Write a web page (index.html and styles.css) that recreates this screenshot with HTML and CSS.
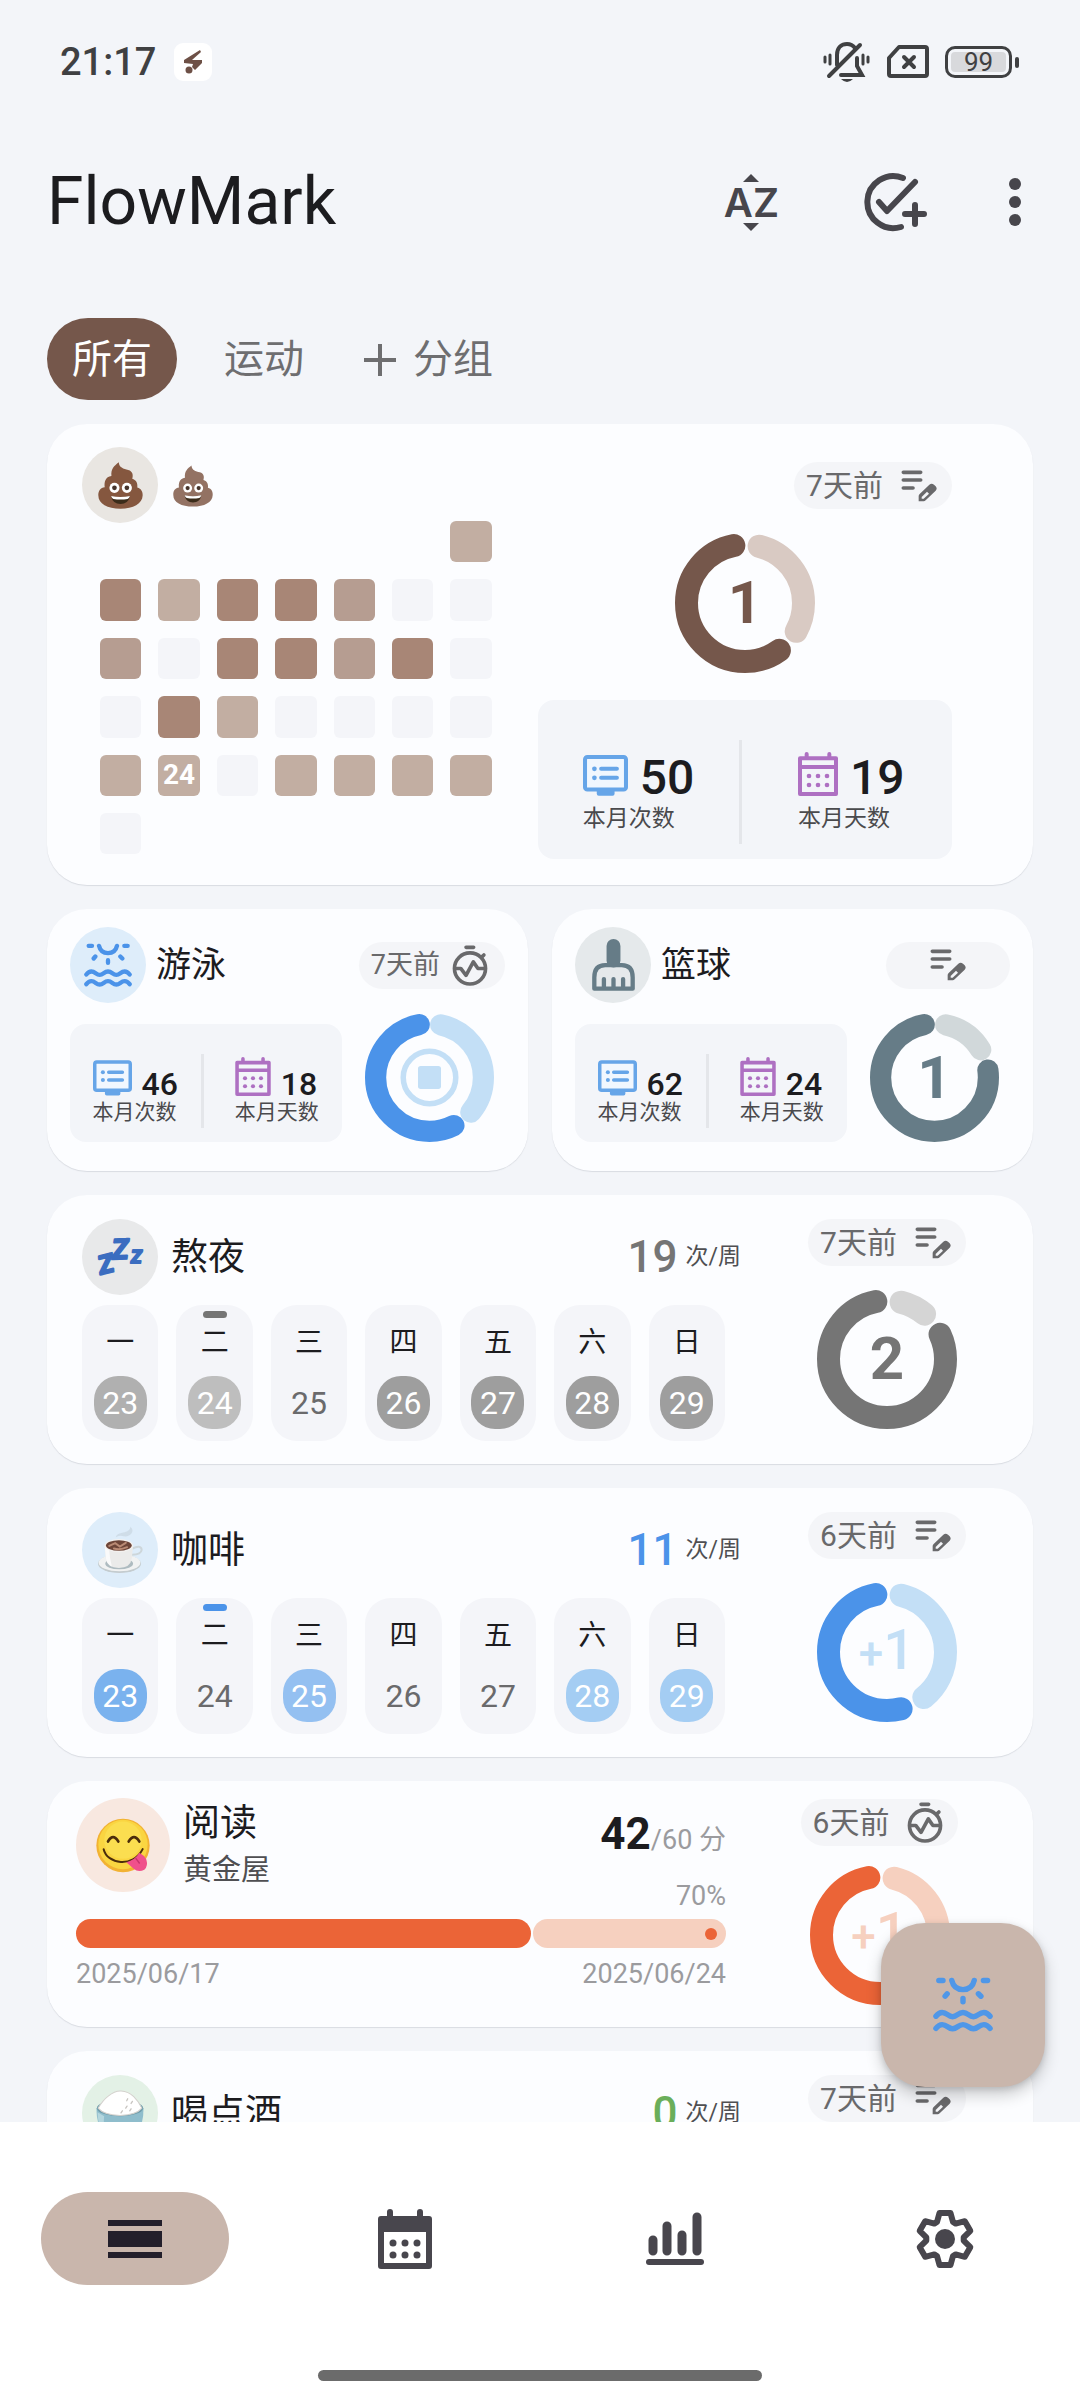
FILE: index.html
```html
<!DOCTYPE html>
<html lang="zh-CN">
<head>
<meta charset="utf-8">
<meta name="viewport" content="width=device-width, initial-scale=1">
<title>FlowMark</title>
<link rel="stylesheet" href="styles.css">
</head>
<body>
<svg class="sprite" aria-hidden="true">
  <symbol id="i-poop" viewBox="0 0 134 140">
    <path fill="currentColor" d="M62 1C62 16 76 21 90 24C104 28 105 40 102 50C113 53 119 63 117 76C129 79 134 90 133 100C132 125 105 139 67 139C28 139 1 125 1 100C0 86 8 76 20 75C18 60 22 44 40 42C38 20 48 12 62 1Z"/>
    <circle cx="49" cy="77" r="15" fill="#fff"/><circle cx="86" cy="77" r="15" fill="#fff"/>
    <circle cx="49" cy="77" r="7" fill="#46342b"/><circle cx="86" cy="77" r="7" fill="#46342b"/>
    <path fill="#3b2c1a" d="M39 102Q67 108 95 102Q90 125 67 125Q44 125 39 102Z"/>
    <path fill="#fff" d="M39 101Q67 107 95 101Q93 108 88 110Q67 114 46 110Q41 108 39 101Z"/>
  </symbol>
  <symbol id="i-coffee" viewBox="0 0 136 145">
    <path fill="#cbd8e3" opacity=".8" d="M54 34C58 14 96 26 98 2C114 16 96 34 78 31Q66 27 54 34Z"/>
    <ellipse cx="65" cy="114" rx="65" ry="28" fill="#c4cccf"/><ellipse cx="65" cy="111" rx="63" ry="26" fill="#f1f2f2"/>
    <ellipse cx="64" cy="114" rx="42" ry="17" fill="#aebbc0"/>
    <path fill="none" stroke="#cdd6da" stroke-width="6" d="M104 68Q130 56 132 72Q130 86 103 87"/>
    <path fill="#ebebea" d="M20 60L24 98Q28 126 63 127Q98 126 102 98L106 60Z"/>
    <path fill="#fafafa" d="M20 60L24 98Q27 116 42 122Q34 90 34 68Z"/>
    <ellipse cx="63" cy="59" rx="43" ry="20" fill="#f3f1ef"/><ellipse cx="63" cy="59" rx="39" ry="16" fill="#6d4538"/>
    <path fill="none" stroke="#b98a74" stroke-width="6" stroke-linecap="round" d="M34 60L52 52L66 62L84 51M48 68Q66 74 88 64"/>
  </symbol>
  <symbol id="i-yum" viewBox="0 0 168 164">
    <circle cx="84" cy="82" r="80" fill="#f2b233"/><circle cx="84" cy="79" r="74" fill="#fad541"/><circle cx="84" cy="66" r="56" fill="#fbde50"/>
    <g fill="none" stroke="#4b2d0b" stroke-linecap="round"><path stroke-width="8" d="M39 70Q54 44 70 70M101 70Q117 44 133 70"/><path stroke-width="6" d="M26 93C36 138 114 150 143 93"/></g>
    <path fill="#f0508b" d="M94 132Q120 126 133 104Q148 112 154 124Q160 144 148 155Q130 164 116 152Z"/><path fill="none" stroke="#c8336c" stroke-width="4" d="M122 120L134 136"/>
  </symbol>
  <symbol id="i-rice" viewBox="0 0 142 140">
    <path fill="#8fbdcc" d="M1 54Q0 130 50 138H92Q142 130 141 54Z"/><path fill="#b4d6de" d="M4 66Q6 120 30 136Q20 100 24 78Z"/>
    <ellipse cx="71" cy="54" rx="69" ry="24" fill="#6f9dac"/>
    <path fill="#fff" stroke="#d4d1cd" stroke-width="3" d="M6 54Q20 30 36 18Q56 2 74 3Q96 4 112 20Q128 36 136 54Q120 74 71 76Q22 74 6 54Z"/>
    <path stroke="#c8c5c1" stroke-width="4" stroke-linecap="round" d="M94 26l-3 6M108 34l-4 6M92 48l-4 6M78 62l-4 6M104 56l-4 6"/>
  </symbol>
  <symbol id="i-swim" viewBox="0 0 144 134">
    <path fill="none" stroke="currentColor" stroke-width="13" stroke-linecap="round" d="M45 8Q50 30 72 30T99 8M14 8H24M121 8H131M34 40L29 46M109 40L115 46M72 51V59M7 94Q14 85 22 85C34 85 36 95 47 95S60 85 72 85S86 95 97 95S110 85 122 85Q130 85 137 94M7 123Q14 114 22 114C34 114 36 124 47 124S60 114 72 114S86 124 97 124S110 114 122 114Q130 114 137 123"/>
  </symbol>
  <symbol id="i-brush" viewBox="0 0 130 157">
    <rect x="44" width="42" height="86" rx="21" fill="currentColor"/>
    <path fill="none" stroke="currentColor" stroke-width="13" stroke-linecap="round" stroke-linejoin="round" d="M7 150V116Q7 79 40 79H90Q123 79 123 116V150ZM36 121V146M65 121V146M94 121V146"/>
  </symbol>
  <symbol id="i-note" viewBox="0 0 106 96">
    <path fill="none" stroke="currentColor" stroke-width="11" stroke-linecap="round" d="M6 7H58M6 30H58M6 54H35"/>
    <path fill="currentColor" d="M52 94V78Q52 75 55 72L84 44Q91 38 98 44L103 49Q109 56 103 62L73 91Q70 94 67 94Z"/><path fill="#f4f5f8" d="M61 86V81L77 65L83 71L67 86Z"/>
  </symbol>
  <symbol id="i-timer" viewBox="0 0 106 124">
    <g fill="none" stroke="currentColor" stroke-width="11" stroke-linecap="round" stroke-linejoin="round"><circle cx="53" cy="71" r="47"/><path d="M41 7H64M89 36L95 30"/><path stroke-linecap="butt" d="M8 71H25L41 92L63 51L77 71H98"/></g>
  </symbol>
  <symbol id="i-screen" viewBox="0 0 134 122">
    <rect x="6" y="6" width="122" height="97" rx="7" fill="#f1f7fe" stroke="currentColor" stroke-width="12"/><rect x="41" y="103" width="53" height="18" rx="6" fill="currentColor"/>
    <circle cx="34" cy="41" r="7" fill="currentColor"/><circle cx="34" cy="68" r="7" fill="currentColor"/><path stroke="currentColor" stroke-width="12" stroke-linecap="round" d="M54 41H101M54 68H101"/>
  </symbol>
  <symbol id="i-cal" viewBox="0 0 120 132">
    <path fill="none" stroke="currentColor" stroke-width="12" stroke-linecap="round" stroke-linejoin="round" d="M6 19H114V126H6ZM6 45H114M26 6V18M94 6V18"/>
    <g fill="currentColor"><circle cx="33" cy="72" r="7"/><circle cx="60" cy="72" r="7"/><circle cx="87" cy="72" r="7"/><circle cx="33" cy="99" r="7"/><circle cx="60" cy="99" r="7"/><circle cx="87" cy="99" r="7"/></g>
  </symbol>
</svg>

<div class="app">
  <div class="status">
    <div class="status-side">
      <span class="clock">21:17</span>
      <svg class="app-mark" viewBox="0 0 38 38"><rect width="38" height="38" rx="9" fill="#fff"/><path d="M26 7L10 17V20L19 21L18 24L21 27L28 20V17L18 17L27 9Z" fill="#6d5046"/><circle cx="15" cy="27" r="3.500" fill="#6d5046"/></svg>
    </div>
    <div class="status-side icons">
      <svg width="48" height="42" viewBox="0 0 48 42" fill="none" stroke="currentColor" stroke-width="4" stroke-linecap="round"><path d="M14 24V14C14 6 19 3 24 3Q29 3 32 7M34 17V25L39 34H18M6 35L37 4"/><path stroke-width="3" d="M2 16V21M7 14V23M40 14V23M45 16V21"/><path stroke="none" fill="currentColor" d="M18 38H30Q24 44 18 38Z"/></svg>
      <svg width="42" height="34" viewBox="0 0 42 34" fill="none" stroke="currentColor" stroke-width="4" stroke-linecap="round" stroke-linejoin="round"><path d="M2 13L12 2H38Q40 2 40 4V29Q40 31 38 31H4Q2 31 2 29ZM17 12L27 22M27 12L17 22"/></svg>
      <span class="battery"><span class="battery-level">99</span></span>
    </div>
  </div>

  <header class="topbar">
    <h1>FlowMark</h1>
    <div class="actions">
      <button class="sort" aria-label="排序"><i class="up"></i><span>AZ</span><i class="down"></i></button>
      <button aria-label="添加"><svg width="66" height="60" viewBox="0 0 66 60" fill="none" stroke="currentColor" stroke-width="6" stroke-linecap="round" stroke-linejoin="round"><path d="M42 6A26 26 0 1 0 40 55M18 30L26 39L54 10M54 33V52M44 42H63"/></svg></button>
      <button aria-label="更多"><svg width="12" height="48" viewBox="0 0 12 48" fill="currentColor"><circle cx="6" cy="6" r="6"/><circle cx="6" cy="24" r="6"/><circle cx="6" cy="42" r="6"/></svg></button>
    </div>
  </header>

  <nav class="tabs">
    <button class="tab active">所有</button>
    <button class="tab">运动</button>
    <button class="tab add"><svg width="32" height="32" viewBox="0 0 32 32" stroke="currentColor" stroke-width="4"><path d="M0 16H32M16 0V32"/></svg>分组</button>
  </nav>

  <main class="list">
    <section class="card month brown">
      <div class="month-left">
        <div class="head"><span class="avatar"><svg width="45" height="47"><use href="#i-poop"/></svg></span><h2><svg class="title-emoji" width="40" height="42"><use href="#i-poop"/></svg></h2></div>
        <div class="heat">
          <i class="l1 first"></i>
          <i class="l3"></i><i class="l1"></i><i class="l3"></i><i class="l3"></i><i class="l2"></i><i></i><i></i>
          <i class="l2"></i><i></i><i class="l3"></i><i class="l3"></i><i class="l2"></i><i class="l3"></i><i></i>
          <i></i><i class="l3"></i><i class="l1"></i><i></i><i></i><i></i><i></i>
          <i class="l1"></i><i class="l1">24</i><i></i><i class="l1"></i><i class="l1"></i><i class="l1"></i><i class="l1"></i>
          <i></i>
        </div>
      </div>
      <div class="month-right">
        <button class="ago">7天前<svg width="36" height="32"><use href="#i-note"/></svg></button>
        <button class="ring"><svg viewBox="0 0 140 140"><circle class="rest" cx="70" cy="70" r="58.5" pathLength="360" stroke-dasharray="105 255" stroke-dashoffset="-14"/><circle class="done" cx="70" cy="70" r="58.5" pathLength="360" stroke-dasharray="205 155" stroke-dashoffset="-144"/></svg><b>1</b></button>
        <div class="stats">
          <div class="stat"><div><p><svg class="blue-i" width="45" height="41"><use href="#i-screen"/></svg><strong>50</strong></p><span>本月次数</span></div></div>
          <div class="stat"><div><p><svg class="purple-i" width="40" height="44"><use href="#i-cal"/></svg><strong>19</strong></p><span>本月天数</span></div></div>
        </div>
      </div>
    </section>

    <div class="pair">
      <section class="card small blue">
        <div class="head"><span class="avatar"><svg width="48" height="45"><use href="#i-swim"/></svg></span><h2>游泳</h2>
          <button class="ago">7天前<svg width="36" height="41"><use href="#i-timer"/></svg></button></div>
        <div class="small-body">
          <div class="stats">
            <div class="stat"><div><p><svg class="blue-i" width="39" height="36"><use href="#i-screen"/></svg><strong>46</strong></p><span>本月次数</span></div></div>
            <div class="stat"><div><p><svg class="purple-i" width="36" height="39"><use href="#i-cal"/></svg><strong>18</strong></p><span>本月天数</span></div></div>
          </div>
          <button class="ring" aria-label="停止"><svg viewBox="0 0 140 140"><circle class="rest" cx="70" cy="70" r="58.5" pathLength="360" stroke-dasharray="118 242" stroke-dashoffset="-12"/><circle class="done" cx="70" cy="70" r="58.5" pathLength="360" stroke-dasharray="196 164" stroke-dashoffset="-153"/><circle class="stop-ring" cx="70" cy="70" r="28.5"/><rect class="stop" x="57.5" y="57.5" width="25" height="25" rx="3"/></svg></button>
        </div>
      </section>
      <section class="card small slate">
        <div class="head"><span class="avatar"><svg width="43" height="52"><use href="#i-brush"/></svg></span><h2>篮球</h2>
          <button class="ago blank" aria-label="记录"><svg width="36" height="32"><use href="#i-note"/></svg></button></div>
        <div class="small-body">
          <div class="stats">
            <div class="stat"><div><p><svg class="blue-i" width="39" height="36"><use href="#i-screen"/></svg><strong>62</strong></p><span>本月次数</span></div></div>
            <div class="stat"><div><p><svg class="purple-i" width="36" height="39"><use href="#i-cal"/></svg><strong>24</strong></p><span>本月天数</span></div></div>
          </div>
          <button class="ring"><svg viewBox="0 0 140 140"><circle class="rest" cx="70" cy="70" r="58.5" pathLength="360" stroke-dasharray="47 313" stroke-dashoffset="-12"/><circle class="done" cx="70" cy="70" r="58.5" pathLength="360" stroke-dasharray="267 93" stroke-dashoffset="-82"/></svg><b>1</b></button>
        </div>
      </section>
    </div>

    <section class="card week gray">
      <div class="week-left">
        <div class="head"><span class="avatar"><svg width="48" height="38" viewBox="0 0 48 38" class="zzz"><text x="2" y="35" font-size="26" transform="rotate(-14 10 26)">Z</text><text x="16" y="21" font-size="28" transform="rotate(-2 25 12)">Z</text><text x="35" y="25" font-size="18">Z</text></svg></span><h2>熬夜</h2><p class="count"><strong>19</strong>次/周</p></div>
        <ol class="days">
          <li>一<b class="on mid">23</b></li><li class="today">二<b class="on low">24</b></li><li>三<b>25</b></li><li>四<b class="on">26</b></li><li>五<b class="on">27</b></li><li>六<b class="on">28</b></li><li>日<b class="on">29</b></li>
        </ol>
      </div>
      <div class="side">
        <button class="ago">7天前<svg width="36" height="32"><use href="#i-note"/></svg></button>
        <button class="ring"><svg viewBox="0 0 140 140"><circle class="rest" cx="70" cy="70" r="58.5" pathLength="360" stroke-dasharray="26 334" stroke-dashoffset="-14"/><circle class="done" cx="70" cy="70" r="58.5" pathLength="360" stroke-dasharray="284 76" stroke-dashoffset="-65"/></svg><b>2</b></button>
      </div>
    </section>

    <section class="card week blue">
      <div class="week-left">
        <div class="head"><span class="avatar"><svg width="45" height="48"><use href="#i-coffee"/></svg></span><h2>咖啡</h2><p class="count"><strong>11</strong>次/周</p></div>
        <ol class="days">
          <li>一<b class="on">23</b></li><li class="today">二<b>24</b></li><li>三<b class="on mid">25</b></li><li>四<b>26</b></li><li>五<b>27</b></li><li>六<b class="on low">28</b></li><li>日<b class="on low">29</b></li>
        </ol>
      </div>
      <div class="side">
        <button class="ago">6天前<svg width="36" height="32"><use href="#i-note"/></svg></button>
        <button class="ring"><svg viewBox="0 0 140 140"><circle class="rest" cx="70" cy="70" r="58.5" pathLength="360" stroke-dasharray="127 233" stroke-dashoffset="-14"/><circle class="done" cx="70" cy="70" r="58.5" pathLength="360" stroke-dasharray="183 177" stroke-dashoffset="-166"/></svg><span class="plus"><small>+</small>1</span></button>
      </div>
    </section>

    <section class="card read orange">
      <div class="read-left">
        <div class="head"><span class="avatar large"><svg width="56" height="55"><use href="#i-yum"/></svg></span><div class="names"><h2>阅读</h2><p>黄金屋</p></div>
          <div class="goal"><p class="amount"><strong>42</strong>/60 分</p><p>70%</p></div></div>
        <div class="bar" role="progressbar" aria-valuenow="70" aria-valuemin="0" aria-valuemax="100" aria-label="阅读"><span class="fill" style="width:70%"></span><span class="remain"></span></div>
        <p class="dates"><span>2025/06/17</span><span>2025/06/24</span></p>
      </div>
      <div class="side">
        <button class="ago">6天前<svg width="36" height="41"><use href="#i-timer"/></svg></button>
        <button class="ring"><svg viewBox="0 0 140 140"><circle class="rest" cx="70" cy="70" r="58.5" pathLength="360" stroke-dasharray="81 279" stroke-dashoffset="-14"/><circle class="done" cx="70" cy="70" r="58.5" pathLength="360" stroke-dasharray="229 131" stroke-dashoffset="-120"/></svg><span class="plus"><small>+</small>1</span></button>
      </div>
    </section>

    <section class="card week green">
      <div class="week-left">
        <div class="head"><span class="avatar"><svg width="48" height="47"><use href="#i-rice"/></svg></span><h2>喝点酒</h2><p class="count"><strong>0</strong>次/周</p></div>
      </div>
      <div class="side">
        <button class="ago">7天前<svg width="36" height="32"><use href="#i-note"/></svg></button>
      </div>
    </section>
    <button class="fab" aria-label="游泳"><svg width="60" height="56"><use href="#i-swim"/></svg></button>
  </main>

  <footer class="bottom">
    <nav class="bottom-nav">
      <a href="#list" class="current" aria-label="列表"><svg width="54" height="38" viewBox="0 0 54 38" fill="currentColor"><path d="M0 0H54V6H0ZM0 11H54V27H0ZM0 32H54V38H0Z"/></svg></a>
      <a href="#calendar" aria-label="日历"><svg width="54" height="60" viewBox="0 0 54 60"><path fill="none" stroke="currentColor" stroke-width="6" stroke-linecap="round" stroke-linejoin="round" d="M3 10H51V57H3ZM12 3V9M42 3V9"/><path fill="currentColor" d="M3 10H51V23H3Z"/><g fill="currentColor"><circle cx="15" cy="34" r="3.5"/><circle cx="27" cy="34" r="3.5"/><circle cx="39" cy="34" r="3.5"/><circle cx="15" cy="46" r="3.5"/><circle cx="27" cy="46" r="3.5"/><circle cx="39" cy="46" r="3.5"/></g></svg></a>
      <a href="#stats" aria-label="统计"><svg width="60" height="54" viewBox="0 0 60 54" fill="none" stroke="currentColor" stroke-linecap="round"><path stroke-width="9" d="M8 28V39M22 14V39M37 23V39M52 5V39"/><path stroke-width="6" d="M4 50H56"/></svg></a>
      <a href="#settings" aria-label="设置"><svg width="60" height="60" viewBox="-30 -30 60 60"><path fill="none" stroke="currentColor" stroke-width="6" stroke-linejoin="round" d="M-8 -17L-5.500 -26H5.500L8 -17L10.700 -15.400L19.800 -17.800L25.300 -8.200L18.700 -1.600V1.600L25.300 8.200L19.800 17.800L10.700 15.400L8 17L5.500 26H-5.500L-8 17L-10.700 15.400L-19.800 17.800L-25.300 8.200L-18.700 1.600V-1.600L-25.300 -8.200L-19.800 -17.800L-10.700 -15.400Z"/><circle r="10" fill="currentColor"/></svg></a>
    </nav>
    <div class="home-bar"></div>
  </footer>
</div>
</body>
</html>
```
FILE: styles.css
```css
* { box-sizing: border-box; }
body, h1, h2, p, ol { margin: 0; padding: 0; }
body {
  background: #f3f5f9;
  color: #1c1c1f;
  font-family: Roboto, "Noto Sans CJK SC", sans-serif;
}
button { border: 0; padding: 0; background: none; color: inherit; font: inherit; cursor: pointer; }
svg { display: block; flex: none; }
.sprite { position: absolute; width: 0; height: 0; }

.app { display: flex; flex-direction: column; height: 100vh; overflow: hidden; }

/* status bar */
.status { display: flex; justify-content: space-between; align-items: center; height: 124px; padding: 0 60px; color: #3f4042; flex: none; }
.status-side { display: flex; align-items: center; gap: 18px; }
.status-side.icons { gap: 16px; }
.clock { font-size: 38px; font-weight: 500; line-height: 48px; }
.app-mark { width: 38px; height: 38px; }
.battery { position: relative; display: block; width: 67px; height: 32px; border: 3px solid currentColor; border-radius: 10px; padding: 3px; margin-right: 8px; }
.battery::after { content: ""; position: absolute; right: -10px; top: 8px; width: 4px; height: 11px; border-radius: 2px; background: currentColor; }
.battery-level { display: block; height: 20px; border-radius: 4px; background: #d8d9dc; font-size: 26px; line-height: 20px; text-align: center; }

/* top bar */
.topbar { display: flex; justify-content: space-between; align-items: center; height: 156px; padding: 0 59px 0 47px; flex: none; }
h1 { font-size: 66px; font-weight: 400; line-height: 76px; }
.actions { display: flex; align-items: center; gap: 82px; color: #47464c; }
.sort { display: flex; flex-direction: column; align-items: center; font-family: Inter, sans-serif; font-size: 40px; font-weight: 600; }
.sort span { line-height: 41px; }
.up, .down { border: 8px solid transparent; border-top-width: 0; border-bottom-color: currentColor; }
.down { border-top: 8px solid currentColor; border-bottom-width: 0; }

/* group tabs */
.tabs { display: flex; gap: 22px; margin: 38px 47px 0; flex: none; }
.tab { display: flex; align-items: center; gap: 17px; height: 82px; padding: 2px 25px 0; border-radius: 41px; color: #6e6e70; font-size: 40px; line-height: 48px; }
.tab.active { background: #75574b; color: #fff; }
.tab.add { padding: 2px 13px 0; }

/* habit list */
.list { position: relative; display: flex; flex-direction: column; gap: 24px; flex: 1; min-height: 0; padding: 24px 47px 0; overflow: hidden; }
.card { --tone: #75574b; --soft: #d9cac3; --tint: #e9e6e2; flex: none; border-radius: 40px; background: #fcfdff; box-shadow: 0 1px 1px #d9dce2; }
.blue { --tone: #4b93e9; --soft: #c3dff6; --tint: #deedfa; }
.slate { --tone: #667c87; --soft: #d1d8da; --tint: #e5e9eb; }
.gray { --tone: #757575; --soft: #d5d5d5; --tint: #e8e9ea; }
.orange { --tone: #eb6437; --soft: #f6d0bf; --tint: #f8e8e0; }
.green { --tone: #6aae5a; --soft: #cde6c8; --tint: #e3f1e6; }

.head { display: flex; align-items: center; gap: 13px; }
.head h2 { padding-top: 2px; font-size: 37px; font-weight: 400; line-height: 48px; white-space: nowrap; }
.avatar { display: grid; place-items: center; width: 76px; height: 76px; border-radius: 50%; background: var(--tint); color: var(--tone); flex: none; }
.avatar.large { width: 94px; height: 94px; }
.brown .avatar { color: #85573f; }
.title-emoji { color: #937263; margin-left: 2px; }

.ago { display: flex; align-items: center; gap: 18px; height: 47px; padding: 0 15px 0 12px; border-radius: 24px; background: #f4f5f8; color: #69696b; font-size: 30px; line-height: 40px; white-space: nowrap; }

.ring { position: relative; display: grid; place-items: center; width: 140px; height: 140px; color: var(--tone); }
.ring svg { width: 100%; height: 100%; grid-area: 1 / 1; }
.ring b, .plus { grid-area: 1 / 1; font-size: 60px; font-weight: 700; line-height: 60px; }
.plus { color: var(--soft); font-size: 56px; font-weight: 500; }
.plus small { font-size: 44px; }
.ring circle { fill: none; stroke-width: 23px; stroke-linecap: round; transform: rotate(-90deg); transform-origin: center; }
.rest { stroke: var(--soft); }
.done { stroke: var(--tone); }
.ring .stop-ring { stroke: var(--soft); stroke-width: 6px; }
.stop { fill: var(--soft); }

.stats { display: flex; padding: 40px 0 15px; border-radius: 16px; background: #f3f5f9; }
.stat { display: flex; flex: 1; align-items: center; justify-content: center; height: 104px; }
.stat + .stat { border-left: 3px solid #e4e6ea; padding-left: 8px; }
.stat p { display: flex; align-items: flex-end; gap: 12px; height: 44px; }
.stat strong { font-size: 48px; font-weight: 500; line-height: 36px; }
.stat span { display: block; margin-top: 9px; color: #4a4a4d; font-size: 23px; line-height: 28px; }
.blue-i { color: #66a5e8; }
.purple-i { color: #ae70c2; }

/* month card */
.month { display: grid; grid-template-columns: 11fr 10fr; padding: 23px 81px 26px 35px; }
.heat { display: grid; grid-template-columns: repeat(7, 1fr); gap: 17px; margin: -2px 46px 0 18px; }
.heat i { display: grid; place-items: center; aspect-ratio: 1; border-radius: 6px; background: #f4f5f9; color: #fff; font-size: 28px; font-style: normal; font-weight: 700; line-height: 30px; min-width: 0; }
.heat .first { grid-column-start: 7; }
.heat .l1 { background: #c2aea2; }
.heat .l2 { background: #b69d91; }
.heat .l3 { background: #a88676; }
.month-right { display: flex; flex-direction: column; align-items: center; padding-top: 15px; }
.month-right .ago { align-self: flex-end; }
.month-right .ring { margin: 24px 0 27px; }
.month-right .stats { align-self: stretch; }

/* half width cards */
.pair { display: grid; grid-template-columns: 1fr 1fr; gap: 24px; flex: none; }
.small { padding: 18px 23px 29px; }
.small .head { gap: 10px; }
.small h2 { font-size: 35px; }
.small .ago { margin-left: auto; gap: 12px; padding: 0 17px 0 12px; font-size: 27px; }
.small .blank { width: 124px; padding: 0; justify-content: center; }
.small-body { display: flex; align-items: flex-end; gap: 23px; margin-top: 10px; }
.small .stats { flex: 1; padding: 30px 0 14px; }
.small .stat { height: 74px; }
.small .stat p { height: 38px; gap: 10px; }
.small .stat strong { font-size: 32px; line-height: 24px; }
.small .stat span { margin-top: 4px; font-size: 21px; line-height: 24px; }
.small .ring { width: 129px; height: 129px; margin-right: 11px; }

/* week cards */
.week, .read { display: flex; }
.week { padding: 24px 0 23px 35px; }
.week-left { flex: 1; }
.side { display: flex; flex-direction: column; align-items: center; gap: 23px; width: 292px; }
.count { display: flex; align-items: center; gap: 8px; margin-left: auto; color: #4f4f52; font-size: 23px; line-height: 48px; }
.count strong { color: var(--tone); font-size: 44px; font-weight: 500; }
.zzz { overflow: visible; fill: #3b6dc0; stroke: #3b6dc0; stroke-width: 2px; stroke-linejoin: round; font-weight: 700; font-style: italic; }
.days { display: grid; grid-template-columns: repeat(7, 1fr); gap: 18px; margin: 10px 16px 0 0; list-style: none; }
.days li { position: relative; display: flex; flex-direction: column; align-items: center; gap: 13px; height: 136px; padding-top: 18px; border-radius: 26px; background: #f4f5f9; font-size: 28px; line-height: 40px; }
.days b { width: 53px; height: 53px; border-radius: 24px; color: #6a6a6c; font-size: 32px; font-weight: 400; line-height: 54px; text-align: center; }
.days .on { background: #9e9e9e; color: #fff; }
.days .mid { background: #b0b0b0; }
.days .low { background: #bebebe; }
.blue .on { background: #7ab2ee; }
.blue .mid { background: #94c0f1; }
.blue .low { background: #a4cdf3; }
.today::before { content: ""; position: absolute; top: 6px; width: 24px; height: 7px; border-radius: 4px; background: var(--tone); }

/* reading card */
.read { padding: 17px 0 22px 29px; }
.read-left { flex: 1; }
.read .side { width: 307px; gap: 19px; padding-top: 1px; }
.names { align-self: flex-start; }
.names h2 { padding-top: 0; line-height: 52px; }
.names p { color: #4f4f52; font-size: 29px; line-height: 40px; }
.goal { align-self: flex-end; margin: 0 0 -24px auto; color: #9b9b9e; font-size: 27px; line-height: 40px; text-align: right; }
.amount { margin-bottom: 16px; }
.goal strong { color: #1c1c1f; font-size: 44px; font-weight: 700; line-height: 44px; }
.bar { display: flex; gap: 2px; height: 29px; margin-top: 27px; }
.bar span { border-radius: 15px; }
.fill { background: var(--tone); }
.remain { display: flex; align-items: center; justify-content: flex-end; flex: 1; padding-right: 9px; background: var(--soft); }
.remain::after { content: ""; width: 12px; height: 12px; border-radius: 50%; background: var(--tone); }
.dates { display: flex; justify-content: space-between; margin-top: 8px; color: #9b9b9e; font-size: 27px; line-height: 36px; }

.fab { position: absolute; right: 35px; bottom: 35px; display: grid; place-items: center; width: 164px; height: 164px; border-radius: 44px; background: #c9b6ac; color: #4f97e8; box-shadow: 0 8px 16px #0003, 0 2px 6px #0002; }

/* bottom navigation */
.bottom { display: flex; flex-direction: column; align-items: center; flex: none; height: 281px; padding: 70px 0 22px; background: #fff; }
.bottom-nav { display: grid; grid-template-columns: repeat(4, 1fr); align-self: stretch; justify-items: center; }
.bottom-nav a { display: grid; place-items: center; width: 188px; height: 93px; border-radius: 47px; color: #48464d; }
.bottom-nav .current { background: #c9b6ac; color: #231f2b; }
.home-bar { width: 444px; height: 11px; margin-top: auto; border-radius: 6px; background: #6b6b6b; }
```
